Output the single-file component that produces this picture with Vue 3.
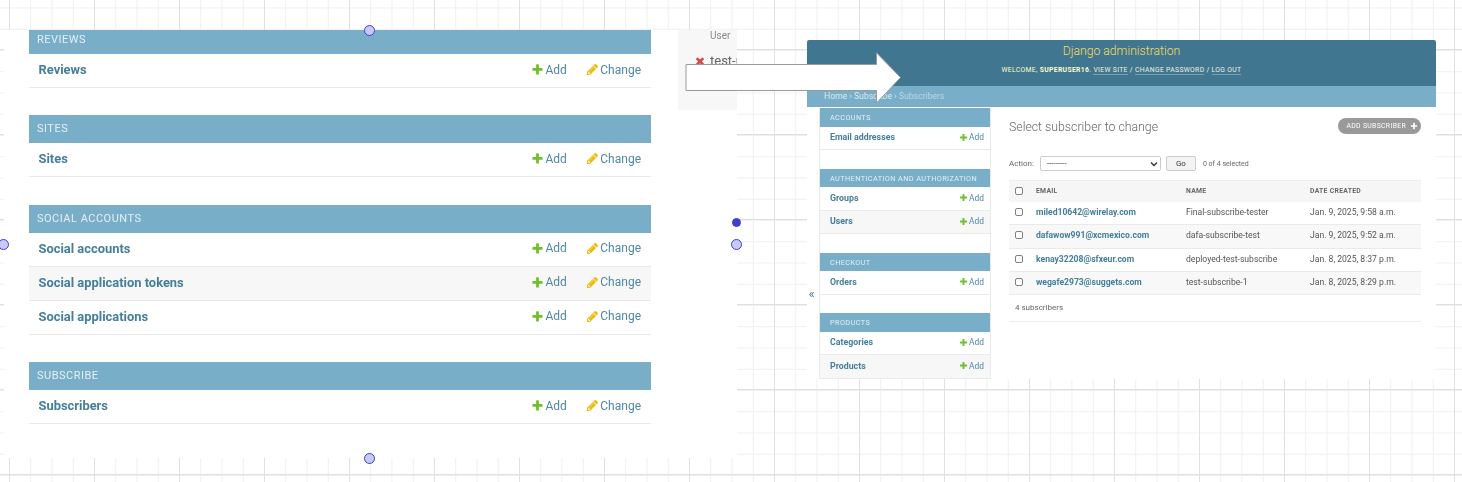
<template>
  <div class="board">
    <section class="shot shot-left">
      <div class="admin-index">
        <div v-for="group in indexGroups" :key="group.title" class="group">
          <div class="group-title">{{ group.title }}</div>
          <div v-for="(row, i) in group.rows" :key="row" class="index-row" :class="{ alt: i % 2 === 1 }">
            <span class="row-name">{{ row }}</span>
            <span class="row-action add-action">
              <svg class="icon" viewBox="0 0 1792 1792"><path fill="#70bf2b" :d="addPath" /></svg>Add
            </span>
            <span class="row-action change-action">
              <svg class="icon" viewBox="0 0 1792 1792"><path fill="#efb80b" :d="changePath" /></svg>Change
            </span>
          </div>
        </div>
      </div>
      <aside class="recent">
        <div class="recent-head">User</div>
        <div class="recent-item">
          <svg class="icon recent-x" viewBox="0 0 1792 1792"><path fill="#dd4646" :d="deletePath" /></svg>
          <span>test-user</span>
        </div>
      </aside>
    </section>

    <section class="shot shot-right">
      <header class="dj-header">
        <div class="dj-brand">Django administration</div>
        <div class="dj-tools">
          Welcome, <strong>superuser16</strong>.
          <a>View site</a> / <a>Change password</a> / <a>Log out</a>
        </div>
      </header>
      <div class="dj-crumbs">Home › Subscribe › <span>Subscribers</span></div>
      <div class="dj-main">
        <div class="toggle">«</div>
        <nav class="side">
          <div v-for="group in sideGroups" :key="group.title" class="side-group">
            <div class="side-title">{{ group.title }}</div>
            <div v-for="(row, i) in group.rows" :key="row" class="side-row" :class="{ alt: i % 2 === 1 }">
              <span class="side-name">{{ row }}</span>
              <span class="side-add">
                <svg class="icon" viewBox="0 0 1792 1792"><path fill="#70bf2b" :d="addPath" /></svg>Add
              </span>
            </div>
          </div>
        </nav>
        <div class="content">
          <div class="content-head">
            <h1>Select subscriber to change</h1>
            <span class="add-pill">Add subscriber
              <svg viewBox="0 0 1792 1792"><path fill="#fff" :d="addPath" /></svg>
            </span>
          </div>
          <div class="actions">
            <label>Action:</label>
            <select class="action-select"><option>---------</option></select>
            <button type="button" class="go">Go</button>
            <span class="selected">0 of 4 selected</span>
          </div>
          <div class="t-row t-head">
            <span class="c-check"><i class="box"></i></span>
            <span class="c-email">Email</span>
            <span class="c-name">Name</span>
            <span class="c-date">Date created</span>
          </div>
          <div v-for="(s, i) in subscribers" :key="s.email" class="t-row t-body" :class="{ alt: i % 2 === 1 }">
            <span class="c-check"><i class="box"></i></span>
            <span class="c-email">{{ s.email }}</span>
            <span class="c-name">{{ s.name }}</span>
            <span class="c-date">{{ s.date }}</span>
          </div>
          <div class="paginator">4 subscribers</div>
        </div>
      </div>
    </section>

    <svg class="arrow" width="218" height="54" viewBox="0 0 218 54">
      <path d="M1 12.5H191.5V0.8L215.5 25.5L191.5 51V38.5H1Z" fill="#fff" stroke="#9a9a9a" stroke-width="1" />
    </svg>

    <i class="dot" style="left: 369.5px; top: 30px"></i>
    <i class="dot" style="left: 3px; top: 244px"></i>
    <i class="dot" style="left: 369.5px; top: 458px"></i>
    <i class="dot" style="left: 736.5px; top: 244px"></i>
    <i class="dot solid" style="left: 736.5px; top: 222px"></i>
  </div>
</template>

<script setup>
const addPath = 'M1600 796v192q0 40-28 68t-68 28h-416v416q0 40-28 68t-68 28h-192q-40 0-68-28t-28-68v-416h-416q-40 0-68-28t-28-68v-192q0-40 28-68t68-28h416v-416q0-40 28-68t68-28h192q40 0 68 28t28 68v416h416q40 0 68 28t28 68z'
const changePath = 'M491 1536l91-91-235-235-91 91v107h128v128h107zm523-928q0-22-22-22-10 0-17 7l-542 542q-7 7-7 17 0 22 22 22 10 0 17-7l542-542q7-7 7-17zm-54-192l416 416-832 832h-416v-416zm683 96q0 53-37 90l-166 166-416-416 166-165q36-38 90-38 53 0 91 38l235 234q37 39 37 91z'
const deletePath = 'M1490 1322q0 40-28 68l-136 136q-28 28-68 28t-68-28l-294-294-294 294q-28 28-68 28t-68-28l-136-136q-28-28-28-68t28-68l294-294-294-294q-28-28-28-68t28-68l136-136q28-28 68-28t68 28l294 294 294-294q28-28 68-28t68 28l136 136q28 28 28 68t-28 68l-294 294 294 294q28 28 28 68z'

const indexGroups = [
  { title: 'Reviews', rows: ['Reviews'] },
  { title: 'Sites', rows: ['Sites'] },
  { title: 'Social accounts', rows: ['Social accounts', 'Social application tokens', 'Social applications'] },
  { title: 'Subscribe', rows: ['Subscribers'] }
]

const sideGroups = [
  { title: 'Accounts', rows: ['Email addresses'] },
  { title: 'Authentication and Authorization', rows: ['Groups', 'Users'] },
  { title: 'Checkout', rows: ['Orders'] },
  { title: 'Products', rows: ['Categories', 'Products'] }
]

const subscribers = [
  { email: 'miled10642@wirelay.com', name: 'Final-subscribe-tester', date: 'Jan. 9, 2025, 9:58 a.m.' },
  { email: 'dafawow991@xcmexico.com', name: 'dafa-subscribe-test', date: 'Jan. 9, 2025, 9:52 a.m.' },
  { email: 'kenay32208@sfxeur.com', name: 'deployed-test-subscribe', date: 'Jan. 8, 2025, 8:37 p.m.' },
  { email: 'wegafe2973@suggets.com', name: 'test-subscribe-1', date: 'Jan. 8, 2025, 8:29 p.m.' }
]
</script>

<style>
html, body {
  margin: 0;
  background: #fff;
}
</style>

<style scoped>
.board {
  position: relative;
  width: 1462px;
  height: 482px;
  overflow: hidden;
  font-family: Roboto, "Liberation Sans", sans-serif;
  background-color: #fff;
  background-image:
    linear-gradient(#e0e0e0 1px, transparent 1px),
    linear-gradient(90deg, #e0e0e0 1px, transparent 1px),
    linear-gradient(#efefef 1px, transparent 1px),
    linear-gradient(90deg, #efefef 1px, transparent 1px);
  background-size: 85px 85px, 85px 85px, 21.25px 21.25px, 21.25px 21.25px;
  background-position: 0 49px, 9px 0, 0 7.5px, 9px 0;
}

/* both captures are soft, scaled-down screenshots */
.shot {
  position: absolute;
  background: #fff;
  overflow: hidden;
  filter: blur(0.35px);
}

.icon {
  display: inline-block;
  flex: none;
}

/* left capture: admin index */
.shot-left {
  left: 4px;
  top: 30px;
  width: 733px;
  height: 428px;
  display: flex;
}

.admin-index {
  width: 622px;
  margin-left: 25px;
  margin-top: -4px;
  flex: none;
}

.group {
  margin-bottom: 27.4px;
}

.group-title {
  height: 28px;
  line-height: 28px;
  padding-left: 8px;
  background: #79aec8;
  color: #e4eff5;
  font-size: 11px;
  letter-spacing: 0.5px;
  text-transform: uppercase;
}

.index-row {
  display: flex;
  align-items: center;
  height: 34px;
  box-sizing: border-box;
  padding: 0 10px 2px 9.5px;
  border-bottom: 1px solid #eaeaea;
  color: #447e9b;
  font-size: 12.9px;
}

.index-row.alt {
  background: #f7f7f7;
}

.row-name {
  flex: 1;
  font-weight: 700;
}

.row-action {
  display: flex;
  align-items: center;
  gap: 1.5px;
  font-size: 12px;
  color: #4f88a5;
}

.row-action .icon {
  width: 13px;
  height: 13px;
}

.change-action {
  margin-left: 19px;
}

.recent {
  width: 59px;
  margin-left: 27px;
  height: 80px;
  background: #f7f7f7;
  white-space: nowrap;
  overflow: hidden;
  flex: none;
}

.recent-head {
  padding-left: 32px;
  font-size: 10px;
  line-height: 11px;
  color: #888;
}

.recent-item {
  display: flex;
  align-items: center;
  margin-top: 12px;
  padding-left: 16px;
  gap: 4px;
  font-size: 13px;
  color: #666;
}

.recent-x {
  width: 12px;
  height: 12px;
}

/* right capture: change list */
.shot-right {
  left: 807px;
  top: 40px;
  width: 629px;
  height: 338.5px;
  border-radius: 2px 2px 0 0;
}

.dj-header {
  height: 46px;
  background: #417690;
  text-align: center;
}

.dj-brand {
  padding-top: 4px;
  font-size: 12.2px;
  line-height: 15px;
  font-weight: 300;
  color: #f5dd5d;
}

.dj-tools {
  margin-top: 6px;
  font-size: 6.8px;
  line-height: 10px;
  letter-spacing: 0.33px;
  text-transform: uppercase;
  color: #ffc;
}

.dj-tools a {
  border-bottom: 1px solid rgba(255, 255, 255, 0.3);
  color: #f0f0e0;
}

.dj-crumbs {
  height: 21px;
  line-height: 20px;
  padding-left: 17px;
  background: #79aec8;
  color: #d8e8f0;
  font-size: 8.6px;
}

.dj-crumbs span {
  color: #bcd6e4;
}

.dj-main {
  position: relative;
  display: flex;
  padding-left: 12px;
}

.toggle {
  position: absolute;
  left: 1.5px;
  top: 180px;
  font-size: 13px;
  line-height: 14px;
  color: #447e9b;
}

.side {
  width: 172px;
  margin-top: 1px;
  height: 270.5px;
  flex: none;
  box-sizing: border-box;
  border-left: 1px solid #eaeaea;
  border-right: 1px solid #eaeaea;
}

.side-group {
  margin-bottom: 18.6px;
}

.side-group:last-child {
  margin-bottom: 0;
}

.side-title {
  height: 18.6px;
  line-height: 19px;
  padding-left: 10px;
  background: #79aec8;
  color: #e4eff5;
  font-size: 7.3px;
  letter-spacing: 0.4px;
  text-transform: uppercase;
}

.side-row {
  display: flex;
  align-items: center;
  height: 23.4px;
  box-sizing: border-box;
  padding: 0 6px 1px 10px;
  border-bottom: 1px solid #eaeaea;
  font-size: 8.8px;
  color: #447e9b;
}

.side-row.alt {
  background: #f7f7f7;
}

.side-name {
  flex: 1;
  font-weight: 700;
}

.side-add {
  display: flex;
  align-items: center;
  gap: 1.5px;
  font-size: 8.4px;
  color: #4f88a5;
}

.side-add .icon {
  width: 9px;
  height: 9px;
}

.content {
  flex: 1;
  padding: 0 15px 0 18px;
  min-width: 0;
}

.content-head {
  display: flex;
  justify-content: space-between;
  align-items: flex-start;
  height: 49px;
  padding-top: 11px;
  box-sizing: border-box;
}

h1 {
  margin: 0;
  font-size: 12.3px;
  line-height: 18px;
  font-weight: 300;
  color: #666;
}

.add-pill {
  display: flex;
  align-items: center;
  gap: 4px;
  height: 16px;
  padding: 0 3px 0 8.5px;
  border-radius: 8px;
  background: #999;
  color: #fff;
  font-size: 6.8px;
  letter-spacing: 0.36px;
  text-transform: uppercase;
}

.add-pill svg {
  width: 8px;
  height: 8px;
}

.actions {
  display: flex;
  align-items: center;
  height: 15px;
  font-size: 8px;
  color: #666;
}

.action-select {
  width: 121px;
  height: 15px;
  margin-left: 6px;
  padding: 0 0 0 6px;
  box-sizing: border-box;
  border: 1px solid #ccc;
  border-radius: 2px;
  appearance: none;
  background: #fff url("data:image/svg+xml,%3Csvg xmlns='http://www.w3.org/2000/svg' width='8' height='6'%3E%3Cpath d='M1 1.5l3 3 3-3' fill='none' stroke='%23333' stroke-width='1.4'/%3E%3C/svg%3E") no-repeat right 2px center;
  font-family: inherit;
  font-size: 8px;
  color: #333;
}

.go {
  width: 30px;
  height: 15px;
  margin-left: 5px;
  padding: 0;
  box-sizing: border-box;
  border: 1px solid #ccc;
  border-radius: 2px;
  background: #f3f3f3;
  font-family: inherit;
  font-size: 8px;
  color: #333;
}

.selected {
  margin-left: 7px;
  font-size: 7px;
}

.t-row {
  display: flex;
  align-items: center;
  box-sizing: border-box;
  font-size: 8.6px;
  color: #555;
}

.t-head {
  height: 22px;
  margin-top: 9px;
  padding-bottom: 1px;
  background: #f6f6f6;
  border-top: 1px solid #eee;
  font-size: 6.8px;
  font-weight: 700;
  letter-spacing: 0.3px;
  color: #666;
  text-transform: uppercase;
}

.t-body {
  height: 23.3px;
  padding-bottom: 2px;
  border-bottom: 1px solid #eaeaea;
}

.t-body.alt {
  background: #f8f8f8;
}

.c-check {
  width: 27px;
  padding-left: 6px;
  box-sizing: border-box;
  display: flex;
}

.box {
  width: 8px;
  height: 8px;
  box-sizing: border-box;
  border: 1px solid #808080;
  border-radius: 2px;
  background: #fff;
}

.c-email {
  width: 150px;
}

.t-body .c-email {
  color: #447e9b;
  font-weight: 700;
}

.c-name {
  width: 124px;
}

.paginator {
  height: 26px;
  line-height: 26px;
  padding-left: 6px;
  border-bottom: 1px solid #eee;
  font-size: 8px;
  color: #666;
}

/* overlays on the canvas */
.arrow {
  position: absolute;
  left: 684.5px;
  top: 52px;
}

.dot {
  position: absolute;
  width: 11px;
  height: 11px;
  margin: -5.5px 0 0 -5.5px;
  box-sizing: border-box;
  border: 1px solid #3f3fc8;
  border-radius: 50%;
  background: #c9c9ff;
}

.dot.solid {
  width: 9px;
  height: 9px;
  margin: -4.5px 0 0 -4.5px;
  background: #3f3fc8;
}
</style>
